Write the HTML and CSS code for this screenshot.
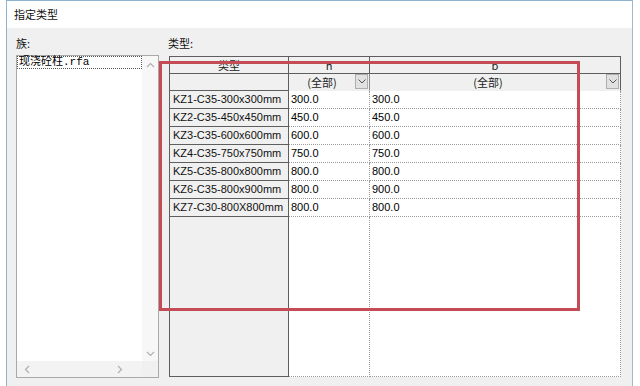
FILE: index.html
```html
<!DOCTYPE html>
<html lang="zh-CN">
<head>
<meta charset="utf-8">
<title>指定类型</title>
<link rel="stylesheet" href="styles.css">
</head>
<body>
<div class="window">
  <div class="titlebar">指定类型</div>
  <div class="content">
    <div class="family-col">
      <div class="label">族:</div>
      <div class="listbox">
        <div class="list-area">
          <div class="list-item">现浇砼柱.rfa</div>
        </div>
        <div class="vscroll">
          <svg width="9" height="6" viewBox="0 0 9 6"><polyline points="1,5 4.5,1.5 8,5" fill="none" stroke="#b0b0b0" stroke-width="1.2"/></svg>
          <svg width="9" height="6" viewBox="0 0 9 6"><polyline points="1,1 4.5,4.5 8,1" fill="none" stroke="#b0b0b0" stroke-width="1.2"/></svg>
        </div>
        <div class="hscroll">
          <svg width="6" height="9" viewBox="0 0 6 9"><polyline points="5,1 1.5,4.5 5,8" fill="none" stroke="#b0b0b0" stroke-width="1.2"/></svg>
          <svg width="6" height="9" viewBox="0 0 6 9"><polyline points="1,1 4.5,4.5 1,8" fill="none" stroke="#b0b0b0" stroke-width="1.2"/></svg>
        </div>
        <div class="corner"></div>
      </div>
    </div>
    <div class="type-col">
      <div class="label">类型:</div>
      <div class="grid">
        <div class="cell hd first">类型</div>
        <div class="cell hd">h</div>
        <div class="cell hd">b</div>

        <div class="cell rowhead"></div>
        <div class="cell filter"><span class="ftext">(全部)</span><span class="dd"><svg width="8" height="5" viewBox="0 0 8 5"><polyline points="0.5,0.5 4,4 7.5,0.5" fill="none" stroke="#555" stroke-width="1"/></svg></span></div>
        <div class="cell filter last"><span class="ftext">(全部)</span><span class="dd"><svg width="8" height="5" viewBox="0 0 8 5"><polyline points="0.5,0.5 4,4 7.5,0.5" fill="none" stroke="#555" stroke-width="1"/></svg></span></div>

        <div class="cell rowhead">KZ1-C35-300x300mm</div>
        <div class="cell data">300.0</div>
        <div class="cell data">300.0</div>

        <div class="cell rowhead">KZ2-C35-450x450mm</div>
        <div class="cell data">450.0</div>
        <div class="cell data">450.0</div>

        <div class="cell rowhead">KZ3-C35-600x600mm</div>
        <div class="cell data">600.0</div>
        <div class="cell data">600.0</div>

        <div class="cell rowhead">KZ4-C35-750x750mm</div>
        <div class="cell data">750.0</div>
        <div class="cell data">750.0</div>

        <div class="cell rowhead">KZ5-C35-800x800mm</div>
        <div class="cell data">800.0</div>
        <div class="cell data">800.0</div>

        <div class="cell rowhead">KZ6-C35-800x900mm</div>
        <div class="cell data">800.0</div>
        <div class="cell data">900.0</div>

        <div class="cell rowhead">KZ7-C30-800X800mm</div>
        <div class="cell data">800.0</div>
        <div class="cell data">800.0</div>

        <div class="cell rowhead"></div>
        <div class="cell data"></div>
        <div class="cell data"></div>
      </div>
    </div>
  </div>
</div>
<div class="highlight"></div>
</body>
</html>
```
FILE: styles.css
```css
html, body {
  margin: 0;
  padding: 0;
  background: #ffffff;
}
body {
  width: 640px;
  height: 386px;
  overflow: hidden;
  position: relative;
  font-family: "Liberation Sans", "Noto Sans CJK SC", sans-serif;
  color: #000;
}
.window {
  margin-left: 6px;
  width: 625px;
  height: 385px;
  border-top: 1px solid #8fb2cf;
  border-left: 1px solid #8fb2cf;
  border-right: 1px solid #9db9d2;
  background: #f0f0f0;
  display: flex;
  flex-direction: column;
}
.titlebar {
  height: 27px;
  background: #ffffff;
  padding-left: 7px;
  font-family: "Noto Sans CJK SC", sans-serif;
  font-size: 11px;
  line-height: 27px;
  color: #111;
}
.content {
  display: flex;
  gap: 10px;
  padding: 7px 0 0 9px;
}
.label {
  font-family: "Noto Sans CJK SC", sans-serif;
  font-size: 11px;
  line-height: 16px;
  height: 16px;
  margin-bottom: 4px;
  color: #111;
}
.family-col {
  width: 143px;
  display: flex;
  flex-direction: column;
}
.listbox {
  width: 141px;
  height: 321px;
  border: 1px solid #a9a9a9;
  background: #ffffff;
  display: grid;
  grid-template-columns: 1fr 16px;
  grid-template-rows: 1fr 16px;
}
.list-item {
  height: 11px;
  border: 1px dotted #555;
  font-family: "Liberation Mono", "Noto Sans CJK SC", monospace;
  font-size: 11px;
  line-height: 11px;
  padding-left: 1px;
}
.vscroll {
  background: #f7f7f7;
  display: flex;
  flex-direction: column;
  justify-content: space-between;
  align-items: center;
  padding: 6px 0 4px;
}
.hscroll {
  background: #f3f3f3;
  display: flex;
  justify-content: space-between;
  align-items: center;
  padding: 0 19px 0 7px;
}
.corner {
  background: #f0f0f0;
}
.type-col {
  display: flex;
  flex-direction: column;
}
.type-col .label {
  margin-left: -1px;
}
.grid {
  margin-top: 1px;
  width: 451px;
  height: 320px;
  border-top: 1px solid #5e5e5e;
  border-left: 1px solid #5e5e5e;
  display: grid;
  grid-template-columns: 119px 81px 251px;
  grid-template-rows: 17px 17px repeat(7, 18px) 1fr;
  background: #ffffff;
  font-size: 11px;
}
.cell {
  box-sizing: border-box;
  line-height: 17px;
  white-space: nowrap;
  overflow: hidden;
}
.hd {
  background: #f0f0f0;
  border-right: 1px solid #5e5e5e;
  border-bottom: 1px solid #5e5e5e;
  text-align: center;
  font-family: "Noto Sans CJK SC", sans-serif;
  font-size: 11px;
  line-height: 16px;
  color: #222;
}
.rowhead {
  background: #f0f0f0;
  border-right: 1px solid #5e5e5e;
  border-bottom: 1px solid #5e5e5e;
  padding-left: 3px;
  color: #111;
}
.filter {
  background: #f0f0f0;
  border-right: 1px solid #8c8c8c;
  border-bottom: 1px solid #f0f0f0;
  display: flex;
  align-items: flex-start;
  padding: 0 1px 0 0;
}
.filter.last {
  border-right: 1px solid #5e5e5e;
}
.ftext {
  flex: 1;
  text-align: center;
  font-family: "Noto Sans CJK SC", sans-serif;
  font-size: 11px;
  line-height: 16px;
  color: #222;
}
.dd {
  width: 11px;
  height: 13px;
  border: 1px solid #adadad;
  background: #e1e1e1;
  display: flex;
  align-items: center;
  justify-content: center;
}
.data {
  border-right: 1px dotted #9a9a9a;
  border-bottom: 1px dotted #9a9a9a;
  padding-left: 2px;
}
.highlight {
  position: absolute;
  left: 159px;
  top: 61px;
  width: 415px;
  height: 244px;
  border: 3px solid #c44c55;
  pointer-events: none;
}
```
